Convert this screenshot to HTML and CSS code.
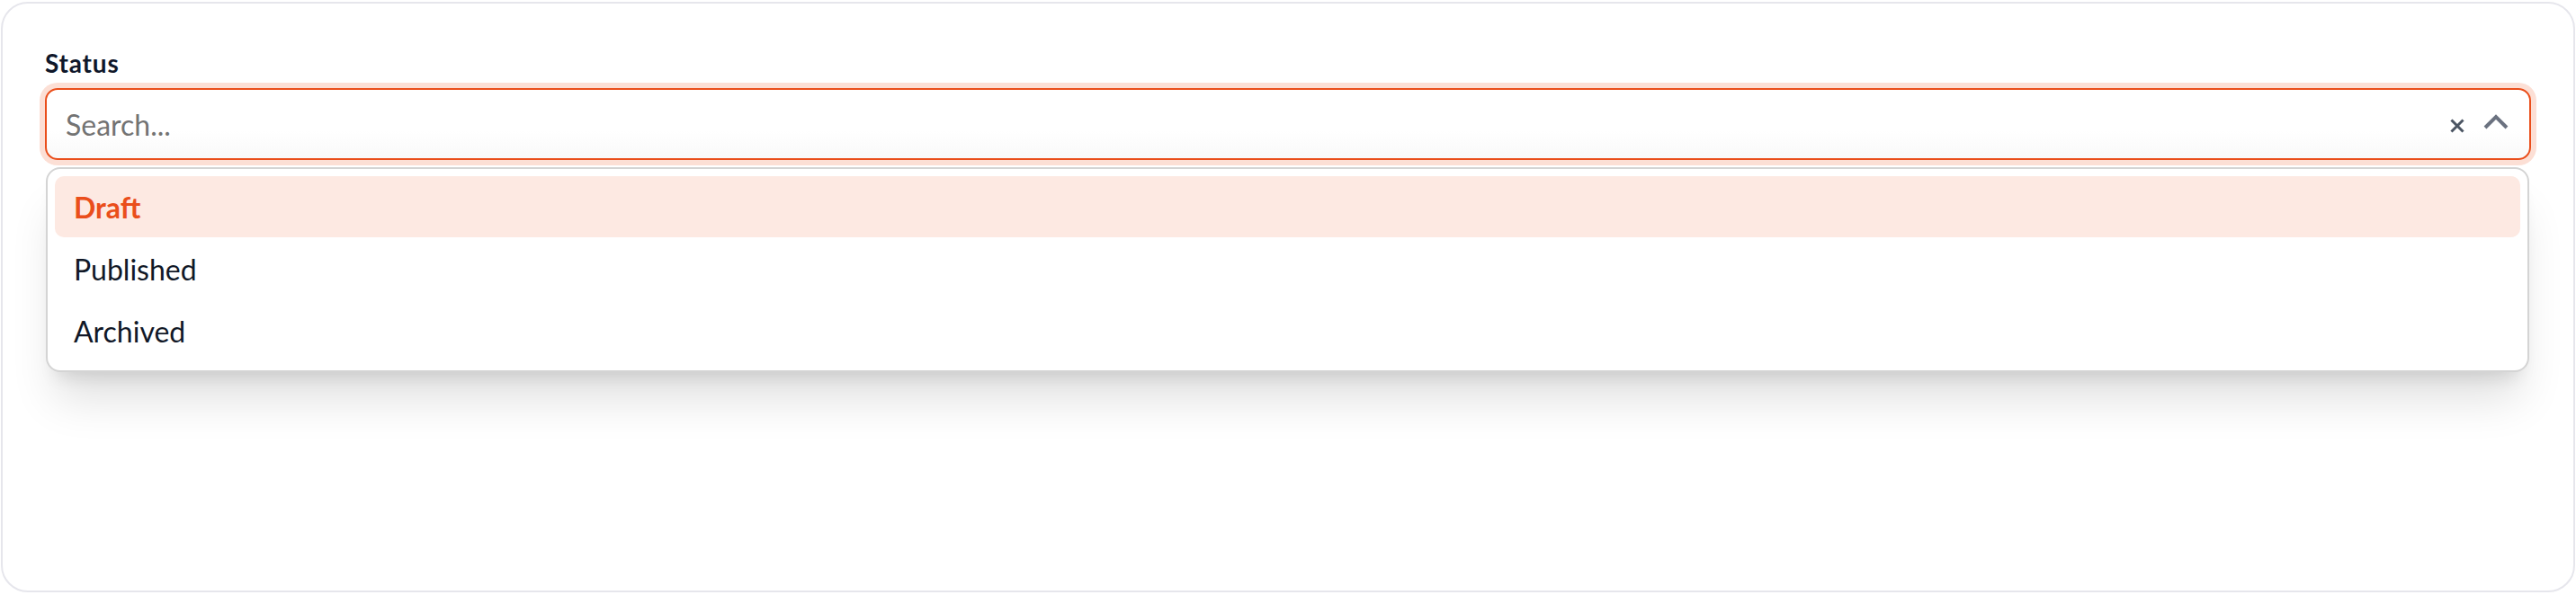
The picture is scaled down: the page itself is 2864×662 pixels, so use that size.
FILE: index.html
```html
<!DOCTYPE html>
<html lang="en">
<head>
<meta charset="utf-8">
<title>Status select</title>
<link rel="stylesheet" href="styles.css">
</head>
<body>
<div class="card">
  <label class="label" for="status-search">Status</label>
  <div class="combo">
    <div class="control">
      <input id="status-search" class="search" type="text" placeholder="Search...">
      <div class="icons">
        <svg class="clear" width="16" height="16" viewBox="0 0 16 16" aria-hidden="true">
          <path d="M2.5 2.5 13.5 13.5M13.5 2.5 2.5 13.5" stroke="#4b5563" stroke-width="3" stroke-linecap="square" fill="none"/>
        </svg>
        <svg class="chev" width="30" height="20" viewBox="0 0 30 20" aria-hidden="true">
          <path d="M3 17 15 5 27 17" stroke="#6b7280" stroke-width="4" fill="none" stroke-linejoin="miter"/>
        </svg>
      </div>
    </div>
    <ul class="menu">
      <li class="option active">Draft</li>
      <li class="option">Published</li>
      <li class="option">Archived</li>
    </ul>
  </div>
</div>
</body>
</html>
```
FILE: styles.css
```css
html, body {
  margin: 0;
  padding: 0;
  background: #ffffff;
}
body {
  padding: 2px 1px 3px 1px;
  font-family: "Lato", "Noto Sans", sans-serif;
}
.card {
  box-sizing: border-box;
  height: 657px;
  border: 2px solid #e6e6ec;
  border-radius: 30px;
  background: #ffffff;
  padding: 46px 47px 0 47px;
  display: flex;
  flex-direction: column;
}
.label {
  font-size: 28px;
  line-height: 40px;
  font-weight: 700;
  letter-spacing: 0.8px;
  color: #0f172a;
  margin-bottom: 8px;
}
.combo {
  position: relative;
}
.control {
  box-sizing: border-box;
  height: 80px;
  border: 2px solid #ea4e1b;
  border-radius: 14px;
  box-shadow: 0 0 0 6px #fcdfd5;
  background: linear-gradient(#ffffff 60%, #f9f9f9);
  display: flex;
  align-items: center;
  padding: 0 22px 0 21px;
}
.search {
  flex: 1;
  border: 0;
  outline: 0;
  background: transparent;
  font-family: "Lato", "Noto Sans", sans-serif;
  font-size: 32px;
  color: #111827;
  padding: 0;
}
.search::placeholder {
  color: #737373;
}
.icons {
  display: flex;
  align-items: center;
  gap: 20px;
}
.clear {
  margin-top: 4px;
}
.chev {
  margin-top: -6px;
}
.menu {
  position: absolute;
  top: calc(100% + 8px);
  left: 1px;
  right: 2px;
  margin: 0;
  padding: 8px 8px 9px 8px;
  list-style: none;
  background: #ffffff;
  border: 2px solid #d4d4d4;
  border-radius: 16px;
  box-shadow: 0 40px 50px -10px rgba(0,0,0,0.12), 0 16px 20px -12px rgba(0,0,0,0.12);
}
.option {
  height: 69px;
  display: flex;
  align-items: center;
  padding: 0 21px;
  font-size: 32px;
  color: #111827;
  border-radius: 10px;
}
.option.active {
  height: 68px;
  margin-bottom: 1px;
  background: #fde9e2;
  color: #ea4e1b;
  font-weight: 700;
}
```
